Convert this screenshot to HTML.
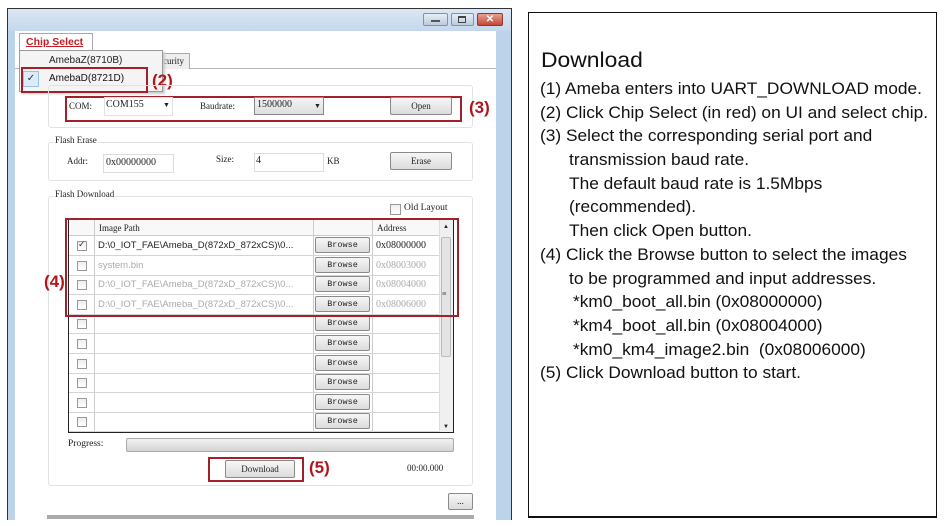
<!DOCTYPE html>
<html><head><meta charset="utf-8">
<style>
*{margin:0;padding:0;box-sizing:border-box}
body{width:945px;height:526px;background:#fff;position:relative;overflow:hidden;font-family:"Liberation Serif",serif;}
.a{position:absolute}
.t{position:absolute;font-size:9px;color:#222;white-space:nowrap;line-height:1}
.btn{position:absolute;border:1px solid #8a8a8a;border-radius:2px;background:linear-gradient(#f6f6f6,#dcdcdc);font-size:9px;text-align:center;color:#222;font-family:"Liberation Serif",serif;}
.red{position:absolute;border:2px solid #a2202a}
.grp{position:absolute;border:1px solid #e2e2e2;border-radius:3px}
.lbl{position:absolute;font-weight:bold;color:#b0161c;font-family:"Liberation Sans",sans-serif;font-size:17px}
.cb{position:absolute;width:10px;height:10px;border:1px solid #999;background:linear-gradient(#eee,#fff)}
.rt{position:absolute;left:540px;font-family:"Liberation Sans",sans-serif;font-size:16.5px;color:#111;white-space:nowrap;transform-origin:0 0;transform:scaleX(1.05)}
</style></head><body>
<!-- window -->
<div class="a" style="left:7px;top:8px;width:505px;height:512px;border:1px solid #333;border-bottom:none;background:linear-gradient(90deg,#bcd3ea 0,#bcd3ea 7px,#fff 7px,#fff 484px,#bcd3ea 484px);"></div>
<div class="a" style="left:8px;top:9px;width:503px;height:22px;background:linear-gradient(#dbe7f4,#c4d7ec);"></div>
<div class="a" style="left:15px;top:31px;width:481px;height:489px;background:#fff;"></div>
<!-- title buttons -->
<div class="a" style="left:423px;top:13px;width:25px;height:13px;border:1px solid #7f93ad;border-radius:2px;background:linear-gradient(#e8eef6,#bccadb)"></div>
<div class="a" style="left:431px;top:20px;width:9px;height:2px;background:#555"></div>
<div class="a" style="left:451px;top:13px;width:23px;height:13px;border:1px solid #7f93ad;border-radius:2px;background:linear-gradient(#e8eef6,#bccadb)"></div>
<div class="a" style="left:458px;top:16px;width:8px;height:7px;border:1px solid #444;border-top-width:2px"></div>
<div class="a" style="left:477px;top:13px;width:26px;height:13px;border:1px solid #8a3a30;border-radius:2px;background:linear-gradient(#e8a090,#c4483a);color:#fff;font:bold 10px 'Liberation Sans',sans-serif;text-align:center;line-height:11px">✕</div>
<!-- tab strip -->
<div class="a" style="left:15px;top:68px;width:481px;height:1px;background:#b8b8b8"></div>
<div class="a" style="left:150px;top:53px;width:40px;height:16px;border:1px solid #aaa;border-bottom:none;background:#eee"></div>
<div class="t" style="left:163px;top:57px">curity</div>
<div class="a" style="left:19px;top:33px;width:74px;height:18px;border:1px solid #aaa;border-bottom:none;background:#fff"></div>
<div class="a" style="left:26px;top:36px;font:bold 10.5px 'Liberation Sans',sans-serif;color:#c81c24;text-decoration:underline">Chip Select</div>
<!-- dropdown -->
<div class="a" style="left:19px;top:50px;width:144px;height:42px;border:1px solid #999;background:#f4f4f4;box-shadow:2px 2px 2px #ccc"></div>
<div class="a" style="left:49px;top:55px;font:10px 'Liberation Sans',sans-serif;color:#222">AmebaZ(8710B)</div>
<div class="a" style="left:23px;top:71px;width:16px;height:16px;border:1px solid #9cc0e4;background:#dcecfc;font-size:10px;text-align:center;line-height:14px;color:#234">✓</div>
<div class="a" style="left:49px;top:73px;font:10px 'Liberation Sans',sans-serif;color:#111">AmebaD(8721D)</div>
<div class="red" style="left:21px;top:67px;width:127px;height:26px"></div>
<div class="lbl" style="left:152px;top:71px">(2)</div>
<!-- group 1 -->
<div class="grp" style="left:48px;top:85px;width:425px;height:43px"></div>
<div class="red" style="left:65px;top:96px;width:397px;height:26px"></div>
<div class="t" style="left:69px;top:102px">COM:</div>
<div class="a" style="left:104px;top:97px;width:69px;height:19px;border:1px solid #e2e2e2;background:#fff"></div>
<div class="t" style="left:106px;top:100px;font-size:10px">COM155</div>
<div class="t" style="left:163px;top:102px;font-size:7px">▼</div>
<div class="t" style="left:200px;top:102px">Baudrate:</div>
<div class="a" style="left:254px;top:97px;width:70px;height:18px;border:1px solid #888;background:linear-gradient(#f4f4f4,#dedede)"></div>
<div class="t" style="left:257px;top:100px;font-size:10px">1500000</div>
<div class="t" style="left:314px;top:103px;font-size:7px">▼</div>
<div class="btn" style="left:390px;top:97px;width:62px;height:18px;line-height:16px">Open</div>
<div class="lbl" style="left:469px;top:98px">(3)</div>
<!-- flash erase -->
<div class="grp" style="left:48px;top:142px;width:425px;height:39px"></div>
<div class="t" style="left:54px;top:136px;background:#fff;padding:0 1px">Flash Erase</div>
<div class="t" style="left:67px;top:157px">Addr:</div>
<div class="a" style="left:103px;top:154px;width:71px;height:19px;border:1px solid #ddd"></div>
<div class="t" style="left:106px;top:158px;font-size:10px">0x00000000</div>
<div class="t" style="left:216px;top:155px">Size:</div>
<div class="a" style="left:254px;top:153px;width:70px;height:19px;border:1px solid #ddd"></div>
<div class="t" style="left:256px;top:156px;font-size:10px">4</div>
<div class="t" style="left:327px;top:157px">KB</div>
<div class="btn" style="left:390px;top:152px;width:62px;height:18px;line-height:16px">Erase</div>
<!-- flash download -->
<div class="grp" style="left:48px;top:196px;width:425px;height:290px"></div>
<div class="t" style="left:54px;top:190px;background:#fff;padding:0 1px">Flash Download</div>
<div class="cb" style="left:390px;top:204px;width:11px;height:11px"></div>
<div class="t" style="left:404px;top:204px;font-size:9.5px">Old Layout</div>
<!-- table -->
<div class="a" style="left:68px;top:219px;width:386px;height:214px;border:1px solid #222;background:#fff"></div>
<div class="a" style="left:69px;top:220px;width:370px;height:16px;background:#f8f8f8;border-bottom:1px solid #ccc"></div>
<div class="t" style="left:99px;top:224px">Image Path</div>
<div class="t" style="left:377px;top:224px">Address</div>
<div class="a" style="left:439px;top:220px;width:14px;height:212px;background:#f0f0f0;border-left:1px solid #ddd"></div>
<div class="a" style="left:441px;top:237px;width:10px;height:120px;background:#e4e4e4;border:1px solid #bbb;border-radius:2px"></div>
<div class="t" style="left:443px;top:224px;font-size:6px">▲</div>
<div class="t" style="left:443px;top:424px;font-size:6px">▼</div>
<div class="t" style="left:442px;top:290px;font-size:8px">≡</div>
<div class="a" style="left:94px;top:220px;width:1px;height:212px;background:#ccc"></div>
<div class="a" style="left:313px;top:220px;width:1px;height:212px;background:#ccc"></div>
<div class="a" style="left:372px;top:220px;width:1px;height:212px;background:#ccc"></div>
<div id="rows"></div>
<div class="red" style="left:65px;top:218px;width:394px;height:99px"></div>
<div class="lbl" style="left:44px;top:272px">(4)</div>
<!-- progress -->
<div class="t" style="left:68px;top:440px;font-size:9.5px">Progress:</div>
<div class="a" style="left:126px;top:438px;width:328px;height:14px;border:1px solid #aaa;border-radius:2px;background:linear-gradient(#f2f2f2,#d4d4d4)"></div>
<div class="red" style="left:208px;top:457px;width:96px;height:25px"></div>
<div class="btn" style="left:225px;top:460px;width:70px;height:18px;line-height:16px">Download</div>
<div class="lbl" style="left:309px;top:458px">(5)</div>
<div class="t" style="left:407px;top:464px">00:00.000</div>
<div class="btn" style="left:448px;top:493px;width:25px;height:17px;line-height:14px">...</div>
<div class="a" style="left:47px;top:515px;width:427px;height:4px;background:#aaa"></div>
<!-- right panel -->
<div class="a" style="left:528px;top:12px;width:409px;height:506px;border:1px solid #111;border-bottom:2px solid #111"></div>
<div class="a" style="left:541px;top:49px;font:21px 'Liberation Sans',sans-serif;color:#111;transform-origin:0 0;transform:scaleX(1.09)">Download</div>
<div class="rt" style="top:80px">(1) Ameba enters into UART_DOWNLOAD mode.</div>
<div class="rt" style="top:104px">(2) Click Chip Select (in red) on UI and select chip.</div>
<div class="rt" style="top:127px">(3) Select the corresponding serial port and</div>
<div class="rt" style="top:151px;left:569px">transmission baud rate.</div>
<div class="rt" style="top:175px;left:569px">The default baud rate is 1.5Mbps</div>
<div class="rt" style="top:198px;left:569px">(recommended).</div>
<div class="rt" style="top:222px;left:569px">Then click Open button.</div>
<div class="rt" style="top:246px">(4) Click the Browse button to select the images</div>
<div class="rt" style="top:270px;left:569px">to be programmed and input addresses.</div>
<div class="rt" style="top:293px;left:573px">*km0_boot_all.bin (0x08000000)</div>
<div class="rt" style="top:317px;left:573px">*km4_boot_all.bin (0x08004000)</div>
<div class="rt" style="top:341px;left:573px">*km0_km4_image2.bin &nbsp;(0x08006000)</div>
<div class="rt" style="top:364px">(5) Click Download button to start.</div>
<script>
var d=[["D:\\0_IOT_FAE\\Ameba_D(872xD_872xCS)\\0...","0x08000000",1],["system.bin","0x08003000",0],["D:\\0_IOT_FAE\\Ameba_D(872xD_872xCS)\\0...","0x08004000",0],["D:\\0_IOT_FAE\\Ameba_D(872xD_872xCS)\\0...","0x08006000",0]];
var h="";for(var i=0;i<10;i++){var y=236+i*19.6;
h+='<div class="a" style="left:69px;top:'+(y+19)+'px;width:370px;height:1px;background:#d4d4d4"></div>';
h+='<div class="cb" style="left:77px;top:'+(y+5)+'px"></div>';
if(i==0)h+='<div class="t" style="left:78px;top:'+(y+4)+'px;font-size:9px;color:#335">✓</div>';
h+='<div class="btn" style="left:315px;top:'+(y+1)+'px;width:55px;height:16px;line-height:14px;font-family:\'Liberation Mono\',monospace;font-size:8.5px">Browse</div>';
if(i<4){var c=d[i][2]?"#222":"#aaa";h+='<div class="t" style="left:98px;top:'+(y+5)+'px;font-family:\'Liberation Sans\',sans-serif;font-size:9.5px;color:'+c+'">'+d[i][0]+'</div><div class="t" style="left:376px;top:'+(y+5)+'px;font-size:10px;color:'+c+'">'+d[i][1]+'</div>';}
}
document.getElementById("rows").innerHTML=h;
</script>
</body></html>
